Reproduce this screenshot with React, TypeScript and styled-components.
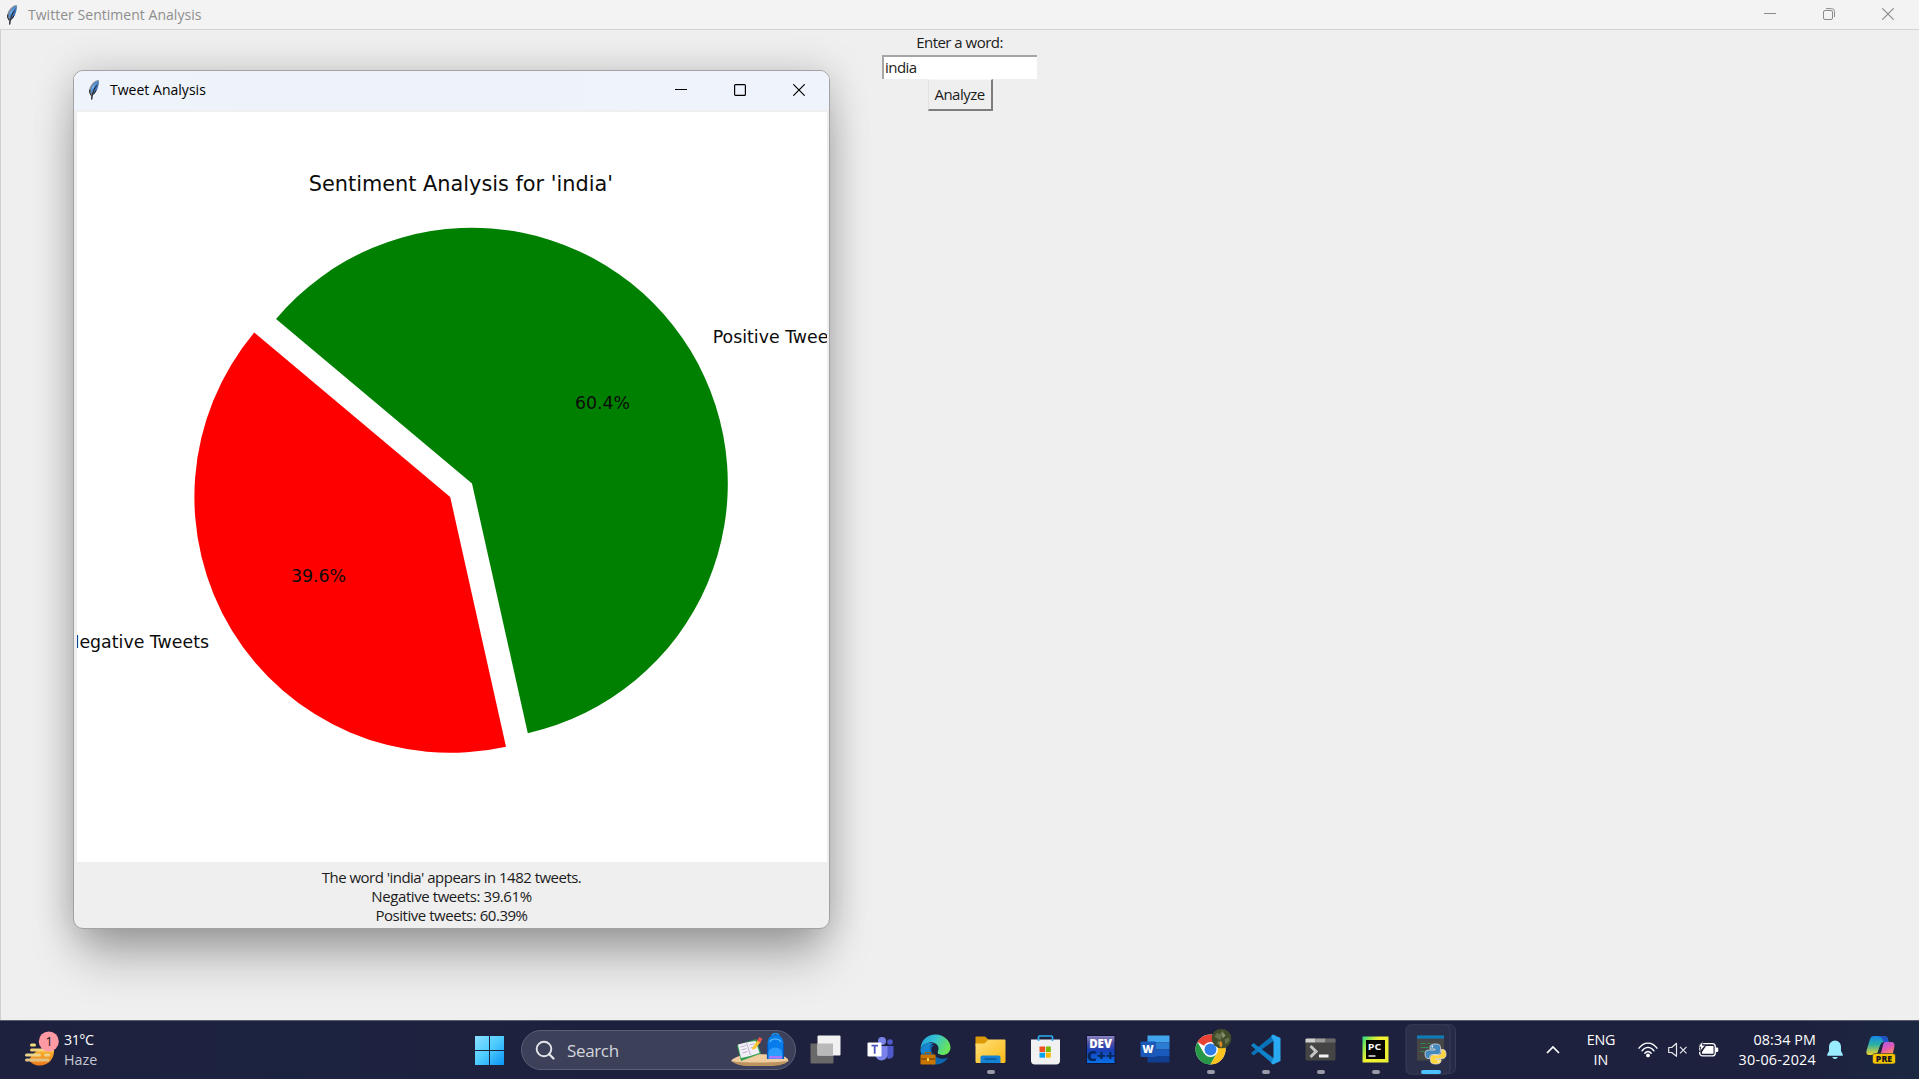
import React from "react";
import styled, { createGlobalStyle } from "styled-components";

const UI = `"Open Sans", "Noto Sans", sans-serif`;

const Global = createGlobalStyle`
  * { box-sizing: border-box; }
  html, body { margin: 0; padding: 0; overflow: hidden; }
  body { font-family: ${UI}; background: #efefef; }
`;

const Screen = styled.div`
  position: relative;
  width: 1919px;
  height: 1079px;
  display: flex;
  flex-direction: column;
  overflow: hidden;
`;

const MainBar = styled.header`
  flex: none;
  height: 30px;
  display: flex;
  align-items: center;
  padding: 0 25px 0 6px;
  background: #f3f3f3;
  border-bottom: 1px solid #d4d4d4;
`;

const BarTitle = styled.span<{ $color: string; $gap: number; $track: number }>`
  margin-left: ${(p) => p.$gap}px;
  flex: 1;
  font-size: 14px;
  line-height: 20px;
  letter-spacing: ${(p) => p.$track}px;
  color: ${(p) => p.$color};
  white-space: nowrap;
`;

const Controls = styled.div<{ $lift?: number }>`
  display: flex;
  align-items: center;
  gap: 47px;
  padding-bottom: ${(p) => p.$lift ?? 0}px;
`;

const MainArea = styled.main`
  flex: 1;
  display: flex;
  flex-direction: column;
  align-items: center;
  padding: 3px 1px 0 0;
  border-left: 1px solid #d0d0d0;
  background: #efefef;
`;

const TkLabel = styled.span<{ $track?: number }>`
  display: block;
  font-size: 15px;
  line-height: 18.8px;
  letter-spacing: ${(p) => p.$track ?? -0.52}px;
  color: #1c1c1c;
  white-space: nowrap;
  text-align: center;
`;

const Entry = styled.div`
  width: 155px;
  height: 24px;
  margin-top: 3px;
  padding: 1px 0 0 1px;
  display: flex;
  background: #fff;
  border-top: 2px solid #a6a6a6;
  border-left: 2px solid #a6a6a6;
`;

const AnalyzeButton = styled.button`
  width: 65px;
  height: 32px;
  margin-left: 1px;
  padding: 0;
  display: flex;
  align-items: center;
  justify-content: center;
  font-family: ${UI};
  background: #efefef;
  border: 1px solid #e2e2e2;
  border-top-color: #f8f8f8;
  border-right: 2px solid #7d7d7d;
  border-bottom: 2px solid #7d7d7d;
`;

const Window = styled.section`
  position: absolute;
  left: 73px;
  top: 70px;
  width: 757px;
  height: 859px;
  display: flex;
  flex-direction: column;
  border: 1px solid #a2a2a2;
  border-radius: 10px;
  overflow: hidden;
  background: #efefef;
  box-shadow: 0 36px 48px -8px rgba(0, 0, 0, 0.27), 0 2px 38px rgba(0, 0, 0, 0.21);
`;

const WindowBar = styled.div`
  height: 39px;
  flex: none;
  display: flex;
  align-items: center;
  padding: 0 24px 1px 14px;
  background: linear-gradient(90deg, #eff3fb 0%, #eef3f9 30%, #eef3f9 60%, #eff3fb 75%);
`;

const Figure = styled.div`
  margin: 2px 2px 0 3px;
  width: 750px;
  height: 750px;
  background: #fff;
`;

const Summary = styled.div`
  flex: 1;
  padding-top: 6px;
  display: flex;
  flex-direction: column;
  align-items: center;
`;

const Taskbar = styled.footer`
  position: relative;
  flex: none;
  height: 59px;
  display: flex;
  align-items: center;
  color: #fff;
  background: linear-gradient(90deg, #1e213e 0%, #1c2340 15%, #1e213e 30%, #1e213e 94%, #1b2841 100%);
  border-top: 1px solid #5a5d70;
`;

const Weather = styled.div`
  width: 455px;
  flex: none;
  padding-left: 24px;
  display: flex;
  align-items: center;
`;

const Lines = styled.div<{ $align: string; $width?: number }>`
  display: flex;
  flex-direction: column;
  align-items: ${(p) => p.$align};
  width: ${(p) => (p.$width ? `${p.$width}px` : "auto")};
  padding-bottom: 1px;
  font-size: 14.3px;
  line-height: 20px;
  white-space: nowrap;
`;

const Line = styled.span<{ $track?: number; $dim?: boolean }>`
  letter-spacing: ${(p) => p.$track ?? 0}px;
  color: ${(p) => (p.$dim ? "#c6c8d0" : "#ffffff")};
`;

const StartSlot = styled.div`
  width: 66px;
  flex: none;
  display: flex;
  padding-left: 20px;
`;

const SearchPill = styled.div`
  width: 275px;
  height: 40px;
  flex: none;
  display: flex;
  align-items: center;
  padding: 0 6px 0 13px;
  border: 1px solid #5b5f76;
  border-radius: 20px;
  background: #3d4059;
`;

const SearchText = styled.span`
  flex: 1;
  margin-left: 12px;
  padding-top: 1px;
  font-size: 17px;
  letter-spacing: -0.35px;
  line-height: 24px;
  color: #d3d5dc;
`;

const Apps = styled.div`
  display: flex;
  flex: none;
  margin-left: 2px;
`;

const AppSlot = styled.div<{ $mark?: "open" | "active" }>`
  position: relative;
  width: 55px;
  height: 58px;
  display: flex;
  align-items: center;
  justify-content: center;
  &::after {
    content: "";
    display: ${(p) => (p.$mark ? "block" : "none")};
    position: absolute;
    bottom: 5px;
    left: 50%;
    width: ${(p) => (p.$mark === "active" ? 20 : 8)}px;
    height: 4px;
    transform: translateX(-50%);
    border-radius: 2px;
    background: ${(p) => (p.$mark === "active" ? "#4cc2ff" : "#989aa8")};
  }
`;

const Tray = styled.div`
  flex: 1;
  display: flex;
  align-items: center;
`;

const TrayItem = styled.div<{ $left: number }>`
  margin-left: ${(p) => p.$left}px;
  display: flex;
  flex: none;
`;

const Feather = () => (
  <svg width="12" height="22" viewBox="0 0 12 22">
    <path d="M10.6 1C7 1.2 2.5 5.4 1.5 10c-.4 2 .2 4.4 1.4 6l.2 4.5h1.2l.3-4.300C8.700 13.500 11 7.600 10.600 1z" fill="#7c8795" />
    <path d="M10 1.800C7.500 3 4.200 6.500 2.800 11l-.3 3.500C5 12.500 8 7 10 1.800z" fill="#4f92dc" />
    <path d="M10.600 1c.4 4.500-.8 8.500-3 11.800l-3 3.200L6 11.500z" fill="#3f72b8" />
    <path d="M8.500 6.500C6.500 9 4.400 13 3.700 20.500M1.800 10.500l-.2 3 1.600 3M8.200 11.500l-2.800 4" fill="none" stroke="#17181c" strokeWidth="1" />
    <path d="M6 6.500L4.300 9.500" stroke="#7db9f2" strokeWidth="1.200" />
  </svg>
);

const Minimize = ({ color }: { color: string }) => (
  <svg width="12" height="12" viewBox="0 0 12 12">
    <path d="M0 5.500h12" stroke={color} />
  </svg>
);
const Maximize = ({ color }: { color: string }) => (
  <svg width="12" height="12" viewBox="0 0 12 12">
    <rect x=".6" y=".6" width="10.800" height="10.800" rx="1" fill="none" stroke={color} strokeWidth="1.200" />
  </svg>
);
const Restore = ({ color }: { color: string }) => (
  <svg width="12" height="12" viewBox="0 0 12 12">
    <rect x=".5" y="2.500" width="9" height="9" rx="1.500" fill="none" stroke={color} />
    <path d="M3 .6h5.500a3 3 0 0 1 3 3V9" fill="none" stroke={color} />
  </svg>
);
const Close = ({ color }: { color: string }) => (
  <svg width="12" height="12" viewBox="0 0 12 12">
    <path d="M.3.3l11.400 11.400M11.700.3L.3 11.700" stroke={color} strokeWidth="1.200" />
  </svg>
);

type Slice = { cx: number; cy: number; from: number; to: number; fill: string };
const RADIUS = 255.8;
const slices: Slice[] = [
  { cx: 373.2, cy: 385, from: 140, to: 282.6, fill: "#ff0000" },
  { cx: 395, cy: 371.5, from: 282.6, to: 500, fill: "#008000" },
];
const slicePath = ({ cx, cy, from, to }: Slice) => {
  const point = (deg: number) => {
    const a = (deg * Math.PI) / 180;
    return `${cx + RADIUS * Math.cos(a)} ${cy - RADIUS * Math.sin(a)}`;
  };
  return `M${cx} ${cy}L${point(from)}A${RADIUS} ${RADIUS} 0 ${to - from > 180 ? 1 : 0} 0 ${point(to)}Z`;
};

const PieChart = () => (
  <svg width="750" height="750" viewBox="0 0 750 750" fontFamily='"DejaVu Sans", sans-serif' fontSize="17.360" fill="#0c0c0c" display="block">
    {slices.map((s) => (
      <path key={s.fill} d={slicePath(s)} fill={s.fill} />
    ))}
    <text x="383.900" y="79" fontSize="20.830" textAnchor="middle">Sentiment Analysis for 'india'</text>
    <text x="635.700" y="230.500">Positive Tweets</text>
    <text x="132" y="535.500" textAnchor="end">Negative Tweets</text>
    <text x="525.500" y="297" textAnchor="middle">60.4%</text>
    <text x="241.500" y="469.500" textAnchor="middle">39.6%</text>
  </svg>
);

const HazeIcon = () => (
  <svg width="40" height="44" viewBox="0 0 40 44">
    <defs>
      <linearGradient id="sun" x1="0" y1="0" x2="0" y2="1">
        <stop offset="0" stopColor="#f9b52b" /><stop offset="1" stopColor="#ee7a1c" />
      </linearGradient>
    </defs>
    <path d="M14 22H30C30.500 31 24 37.500 16 37.500C11 37.500 7 35.500 5 32L8 27z" fill="url(#sun)" />
    <g strokeLinecap="round" strokeWidth="3">
      <path d="M7.500 17h3" stroke="#f5dc7a" />
      <path d="M7.500 22h21" stroke="#f2d27a" />
      <path d="M2.500 27h13M21.500 27h3" stroke="#ecd38c" />
      <path d="M2.500 32h21.500" stroke="#e2c184" />
    </g>
    <circle cx="24.800" cy="13.400" r="10" fill="#ff99a4" />
    <text x="25" y="18.200" textAnchor="middle" fontFamily={UI} fontSize="13.500" fill="#1a1a1a">1</text>
  </svg>
);

const StartIcon = () => (
  <svg width="29" height="29" viewBox="0 0 29 29">
    <defs>
      <linearGradient id="win" x1="0" y1="0" x2="1" y2="1">
        <stop offset="0" stopColor="#8be0ff" /><stop offset=".5" stopColor="#4ccbff" /><stop offset="1" stopColor="#0a93f5" />
      </linearGradient>
    </defs>
    <path d="M0 0h14v14H0zM15 0h14v14H15zM0 15h14v14H0zM15 15h14v14H15z" fill="url(#win)" />
  </svg>
);

const SearchArt = () => (
  <svg width="58" height="34" viewBox="0 0 58 34">
    <path d="M0 28C3 24 12 21 22 21L46 21.500C53 22.500 57 25 57.500 28L52 31H8z" fill="#f0cda0" />
    <path d="M0 28c10 2 47 2 57.500 0C52 32.500 45 33 40 33H18C10 33 4 31 0 28z" fill="#bd935f" />
    <path d="M6 12.500L25 6l5 14.500L10 28z" fill="#35a055" />
    <path d="M7 11.500L15 9.500l9.500-1.500 4 12L19 23 10 25z" fill="#f3eff8" />
    <path d="M15.500 10l4 12M9.500 14l5-1.500M10.500 17l5-1.500M11.500 20l5-1.500M18.500 12l5-1.300M19.500 15l5-1.300" stroke="#a493bd" strokeWidth=".7" fill="none" />
    <path d="M21.500 14.500L27 6.500l3 2-6 7.500-3 .8z" fill="#ffc62e" /><path d="M26 7.500l2.500-3.500 3 2-2.500 3.500z" fill="#ee5548" />
    <path d="M41 3.500c0-4 7-4 7 0" fill="none" stroke="#1597f5" strokeWidth="1.500" />
    <path d="M36.500 11c0-6 3-9 8-9s8 3 8 9v15h-16z" fill="#087ceb" />
    <path d="M39 9c1-4 9-4 11 0" stroke="#5fbcff" strokeWidth="1.200" fill="none" />
    <path d="M37.500 20c0-7 13.500-7 13.500 0v6H37.500z" fill="#2c9cff" /><path d="M38 23h13v2.500H38z" fill="#a678ff" />
    <path d="M36.500 11v15M52.500 11v15" stroke="#0655b8" strokeWidth="1.200" />
  </svg>
);

// Taskbar icons share one canvas whose origin is the middle of the slot.
const Glyph = ({ children }: { children: React.ReactNode }) => (
  <svg width="55" height="58" viewBox="-27.500 -28.500 55 58" fontFamily={UI}>{children}</svg>
);

const TaskViewIcon = () => (
  <Glyph>
    <path d="M-15-6H8v19a1 1 0 0 1-1 1h-21a1 1 0 0 1-1-1z" fill="#696969" />
    <rect x="-8" y="-14" width="23" height="20" rx="1" fill="#f1f1f1" />
    <path d="M-8-6H7.500V6H-8z" fill="#b9b9b9" />
  </Glyph>
);
const TeamsIcon = () => (
  <Glyph>
    <circle cx="9.500" cy="-7.500" r="2.800" fill="#5059c9" />
    <path d="M5-3.500h8V5a4.500 4.500 0 0 1-6 4z" fill="#5059c9" />
    <circle cx="1.500" cy="-8.500" r="4" fill="#7b83eb" />
    <path d="M-5-3.500H7V5A6 6 0 0 1-5 5z" fill="#7b83eb" />
    <rect x="-13" y="-7" width="14" height="14" rx="1" fill="#fff" />
    <path d="M-9-3.800h6.500M-5.800-3.500V4.300" stroke="#4b53bc" strokeWidth="1.800" />
  </Glyph>
);
const EdgeIcon = () => (
  <Glyph>
    <defs>
      <linearGradient id="edge" x1="0" x2="1" y1="0" y2=".4">
        <stop offset="0" stopColor="#1c9de0" /><stop offset=".5" stopColor="#36c2d2" /><stop offset="1" stopColor="#68e35b" />
      </linearGradient>
    </defs>
    <path d="M-15 0C-15 9-8 15 0 15c6 0 10-3 12.500-7C8 10 4 9 2 8L-2-5z" fill="#0c66b0" />
    <path d="M-15 1C-15-10-8-15 0-15S15-9 15-2C15 3 11 5.500 7 5.500S1 4 2.500 1.500C5-4-1-8-6-7S-14-4-15 1z" fill="url(#edge)" />
    <path d="M-15 1C-13-6-7-8-2-6c-4 1-5.500 6-2 10h-10z" fill="#1786cf" />
    <path d="M-2-4C-6-1-4 6 2 8s9 0 11-1C15 4 10 6.500 6 5.500S1 3 2.500 1C3.500-3 0-5-2-4z" fill="#1e213e" />
    <rect x="-15" y="5" width="15" height="10" rx="1" fill="#c87400" />
    <path d="M-10 5V3h5v2" fill="none" stroke="#a95c00" strokeWidth="1.200" />
    <path d="M-15 9.500H0" stroke="#8b4b00" strokeWidth="1.500" /><rect x="-8.500" y="8.500" width="2" height="3" fill="#ffd34a" />
  </Glyph>
);
const ExplorerIcon = () => (
  <Glyph>
    <defs>
      <linearGradient id="fold" x1="0" x2="1" y1="0" y2="1">
        <stop offset="0" stopColor="#ffe07a" /><stop offset="1" stopColor="#fbb915" />
      </linearGradient>
    </defs>
    <path d="M-15-12a1 1 0 0 1 1-1h8.500l4 3.500v6H-15z" fill="#dd9a08" />
    <path d="M-15-6h9l4-4h16a1 1 0 0 1 1 1v21a1.500 1.500 0 0 1-1.500 1.500h-27A1.500 1.500 0 0 1-15 12z" fill="url(#fold)" />
    <path d="M-10 13.500V8a2 2 0 0 1 2-2H8a2 2 0 0 1 2 2v5.500z" fill="#1483d6" />
    <path d="M-6 9.500H6" stroke="#0a4d8f" strokeWidth="1.300" />
  </Glyph>
);
const StoreIcon = () => (
  <Glyph>
    <path d="M-14.500-10h29v21a4 4 0 0 1-4 4h-21a4 4 0 0 1-4-4z" fill="#f1f1f1" />
    <path d="M-7-8.500v-4a1 1 0 0 1 1-1H6a1 1 0 0 1 1 1v4" fill="none" stroke="#2aaef0" strokeWidth="1.700" />
    <path d="M-6-3h5.500v5.500H-6z" fill="#f15022" /><path d="M.3-3h5v5.500h-5z" fill="#7db900" />
    <path d="M-6 3.200h5.500v5H-6z" fill="#0aa1ef" /><path d="M.3 3.200h5v5h-5z" fill="#ffb800" />
  </Glyph>
);
const DevIcon = () => (
  <Glyph>
    <defs>
      <linearGradient id="dev" x1="0" x2="0" y1="0" y2="1">
        <stop offset="0" stopColor="#8d88c4" /><stop offset=".25" stopColor="#544fa0" /><stop offset=".55" stopColor="#1740b8" /><stop offset="1" stopColor="#0874ec" />
      </linearGradient>
    </defs>
    <rect x="-14" y="-14" width="28.500" height="28" fill="url(#dev)" stroke="#101538" />
    <text x="0" y="-1.500" textAnchor="middle" fontSize="11.500" fontWeight="800" fill="#fff">DEV</text>
    <text x="-13.500" y="11.500" fontSize="13.500" fontWeight="800" fill="#06265a" textLength="28" lengthAdjust="spacingAndGlyphs">C++</text>
  </Glyph>
);
const WordIcon = () => (
  <Glyph>
    <path d="M-8-14h22v7H-8z" fill="#41a5ee" /><path d="M-8-7h22v7H-8z" fill="#2b7cd3" />
    <path d="M-8 0h22v6.500H-8z" fill="#185abd" /><path d="M-8 6.500h22V13H-8z" fill="#103f91" />
    <rect x="-15" y="-8" width="15.500" height="15.500" rx="1" fill="#1b58b8" />
    <text x="-7.500" y="3.800" textAnchor="middle" fontSize="11" fontWeight="800" fill="#fff">W</text>
  </Glyph>
);
const ChromeIcon = () => (
  <Glyph>
    <circle r="15" fill="#fff" />
    <path d="M0 0L-13-7.500A15 15 0 0 1 13-7.500z" fill="#ea4335" />
    <path d="M-13-7.500A15 15 0 0 0 0 15L6.500 3.500-6.500 3.800z" fill="#279847" />
    <path d="M13-7.500A15 15 0 0 1 0 15L6.500 3.500 5-7.500z" fill="#fcc31e" />
    <circle r="7.500" fill="#fff" /><circle r="6" fill="#2f7de9" />
    <circle cx="11" cy="-11" r="9.800" fill="#414c2b" />
    <path d="M4-13l3-4 2 2 3-4 3 5-4 1-1 4-3-2zM8-9l3 2-2 3-3-2zM14-10l4-2 1 3-4 4z" fill="#67724c" />
    <path d="M9-7l1.500-2L12-5l-1 3-2-1z" fill="#d88a24" /><path d="M12-17l3 3-3 3z" fill="#8c9774" />
  </Glyph>
);
const CodeIcon = () => (
  <Glyph>
    <path d="M-14.500 3.500l2.500 2.500L8-8.500V-15z" fill="#0873b8" />
    <path d="M-14.500-4l2.500-2.500L8 8.500V15z" fill="#0f84cc" />
    <path d="M7.500-15L15-11.500v23L7.500 15l-2-1.500L8 8.500v-17L5.500-13.500z" fill="#29a9f2" />
  </Glyph>
);
const TerminalIcon = () => (
  <Glyph>
    <rect x="-15" y="-11" width="30" height="22" rx="1.500" fill="#454545" />
    <path d="M-14-11h9v4h-10v-3z" fill="#d0d0d0" /><path d="M-5-11H5v4H-5z" fill="#9d9d9d" /><path d="M5-11h9l1 1v3H5z" fill="#696969" />
    <path d="M-10-3.500l5.500 5.500L-10 7.500" fill="none" stroke="#c6c6c6" strokeWidth="3" /><path d="M-1.500 6.500h9.500" stroke="#f3f3f3" strokeWidth="3" />
  </Glyph>
);
const PyCharmIcon = () => (
  <Glyph>
    <defs>
      <linearGradient id="pc" x1="0" x2="1" y1="0" y2=".6">
        <stop offset="0" stopColor="#21d789" /><stop offset=".25" stopColor="#9be84a" /><stop offset=".5" stopColor="#f5f132" /><stop offset="1" stopColor="#e9ee35" />
      </linearGradient>
    </defs>
    <rect x="-13" y="-13" width="26" height="26" fill="url(#pc)" />
    <rect x="-9.500" y="-9.500" width="19" height="19" fill="#050505" />
    <text x="-7.800" y="0" fontSize="9.500" fontWeight="700" fill="#fff" textLength="13.500" lengthAdjust="spacingAndGlyphs">PC</text>
    <path d="M-7 6.500h7" stroke="#fff" strokeWidth="1.400" />
  </Glyph>
);
const PythonIcon = () => (
  <Glyph>
    <path d="M15-24.800h4a6 6 0 0 1 6 6V18a6 6 0 0 1-6 6h-4" fill="#262a46" stroke="#383c55" />
    <rect x="-24.500" y="-24.800" width="44" height="49.500" rx="5" fill="#2b2f4a" stroke="#383c55" />
    <rect x="-13.500" y="-14" width="27" height="25" fill="#464646" /><path d="M-13.500-14h27v3h-27z" fill="#0c7dba" />
    <path d="M-10-6h5M-3-6h3M-10-2h8M-10 2h4" stroke="#2f8b4d" strokeWidth="1.200" />
    <path d="M4.500-5.500c4 0 5.500 1 5.500 3.500v4c0 2-1.200 3-3 3H2C0 5-1 6-1 8v1h-1.500C-5 9-5.500 6-5.500 4S-4.500.5-2 .5H4.500v-1H-.5v-2c0-2 2-3 5-3z" fill="#4488bd" stroke="#eee" strokeWidth=".7" />
    <path d="M5.500 14.500c-4 0-5.500-1-5.500-3.500V8.500c0-2 1-3 3-3H8c2 0 3-1 3-3V0h1.500C15 0 15.500 3 15.500 5s-1 4-3.500 4H5.500v1h5v1.500c0 2-2 3-5 3z" fill="#ffd53f" stroke="#eee" strokeWidth=".7" />
    <circle cx="1.800" cy="-3" r=".9" fill="#fff" /><circle cx="8" cy="12" r=".9" fill="#fff" />
  </Glyph>
);

const apps: { name: string; Icon: React.FC; mark?: "open" | "active" }[] = [
  { name: "Task View", Icon: TaskViewIcon },
  { name: "Teams", Icon: TeamsIcon },
  { name: "Edge", Icon: EdgeIcon },
  { name: "Explorer", Icon: ExplorerIcon, mark: "open" },
  { name: "Store", Icon: StoreIcon },
  { name: "Dev-C++", Icon: DevIcon },
  { name: "Word", Icon: WordIcon },
  { name: "Chrome", Icon: ChromeIcon, mark: "open" },
  { name: "VS Code", Icon: CodeIcon, mark: "open" },
  { name: "Terminal", Icon: TerminalIcon, mark: "open" },
  { name: "PyCharm", Icon: PyCharmIcon, mark: "open" },
  { name: "Python", Icon: PythonIcon, mark: "active" },
];

const Chevron = () => (
  <svg width="14" height="10" viewBox="0 0 14 10"><path d="M1 8l6-6 6 6" fill="none" stroke="#fff" strokeWidth="1.700" /></svg>
);
const Wifi = () => (
  <svg width="20" height="16" viewBox="0 0 20 16">
    <g fill="none" stroke="#fff" strokeWidth="1.400" strokeLinecap="round">
      <path d="M1 6.200C6-.6 14-.6 19 6.200" /><path d="M4 8.800c3.500-4.600 8.500-4.600 12 0" /><path d="M6.800 11.300c2-2.500 4.400-2.500 6.400 0" />
    </g>
    <circle cx="10" cy="13.400" r="1.900" fill="#fff" />
  </svg>
);
const Mute = () => (
  <svg width="20" height="16" viewBox="0 0 20 16" fill="none" stroke="#e4e5ea" strokeWidth="1.200" strokeLinejoin="round">
    <path d="M.7 5.500h3L8.500 1.300v13L3.700 10.500h-3z" /><path d="M12 4.800l6.500 6.500M18.500 4.800L12 11.300" />
  </svg>
);
const Battery = () => (
  <svg width="21" height="18" viewBox="0 0 21 18">
    <rect x="1.700" y="2.700" width="15.600" height="12.200" rx="3" fill="none" stroke="#fff" strokeWidth="1.300" />
    <path d="M8 5h7.500v7.700H4V11z" fill="#fff" /><path d="M18 6.500h1.200a1 1 0 0 1 1 1V10a1 1 0 0 1-1 1H18z" fill="#fff" />
    <path d="M5-.5L.2 6h2.600L1.500 11 7.500 4.200H4.500z" fill="#fff" stroke="#1e213e" strokeWidth=".8" />
  </svg>
);
const Bell = () => (
  <svg width="16" height="20" viewBox="0 0 16 20">
    <path d="M8 .5a6 6 0 0 0-6 6V11L.2 14.500c-.3.600 0 1.200.700 1.200h14.200c.7 0 1-.6.700-1.200L14 11V6.500a6 6 0 0 0-6-6zM5.200 17a3 3 0 0 0 5.600 0z" fill="#99ebff" />
  </svg>
);
const Copilot = () => (
  <svg width="30" height="30" viewBox="0 0 30 30">
    <defs>
      <linearGradient id="cpa" x1="0" y1="0" x2="0" y2="1">
        <stop offset="0" stopColor="#1588e6" /><stop offset=".45" stopColor="#2bb0a4" /><stop offset="1" stopColor="#f4d327" />
      </linearGradient>
      <linearGradient id="cpb" x1="0" y1="0" x2=".5" y2="1">
        <stop offset="0" stopColor="#a05af0" /><stop offset=".6" stopColor="#e159b2" /><stop offset="1" stopColor="#ff8a63" />
      </linearGradient>
    </defs>
    <path d="M8 1h10c3 0 4 2 4.500 6h-4c-3 0-4 2-5 5l-2 6c-.6 2-1.500 2-3 2H3c-3 0-3-3-2-6L4 4c.7-2 2-3 4-3z" fill="url(#cpa)" />
    <path d="M10 1h8c3 0 4 2 4.500 6h-5c-1-4-3-6-7.500-6z" fill="#2152c7" />
    <path d="M19 7h6c3 0 4 2 3.300 5L26.500 20H12c2 0 3-2 3.500-4L17 10c.5-2 1-3 2-3z" fill="url(#cpb)" />
    <path d="M16.500 8l-4.500 11" stroke="#1c2540" strokeWidth="1.600" />
    <rect x="6.500" y="18.500" width="23" height="10.500" rx="2.500" fill="#f5c400" stroke="#1b2740" strokeWidth=".6" />
    <text x="18" y="26.800" textAnchor="middle" fontFamily={UI} fontSize="8.800" fontWeight="800" fill="#16161c">PRE</text>
  </svg>
);

export default function App() {
  return (
    <Screen>
      <Global />
      <MainBar>
        <Feather />
        <BarTitle $color="#8e8e8e" $gap={10} $track={0.03}>Twitter Sentiment Analysis</BarTitle>
        <Controls $lift={1}>
          <Minimize color="#8a8a8a" />
          <Restore color="#8a8a8a" />
          <Close color="#8a8a8a" />
        </Controls>
      </MainBar>
      <MainArea>
        <TkLabel>Enter a word:</TkLabel>
        <Entry><TkLabel>india</TkLabel></Entry>
        <AnalyzeButton><TkLabel>Analyze</TkLabel></AnalyzeButton>
      </MainArea>
      <Taskbar>
        <Weather>
          <HazeIcon />
          <Lines $align="flex-start">
            <Line $track={-0.5}>31°C</Line>
            <Line $dim>Haze</Line>
          </Lines>
        </Weather>
        <StartSlot><StartIcon /></StartSlot>
        <SearchPill>
          <svg width="20" height="20" viewBox="0 0 20 20" fill="none" stroke="#e3e5ea" strokeWidth="1.900">
            <circle cx="9" cy="9" r="7.300" /><path d="M14 14l4.500 4.500" strokeWidth="2.300" strokeLinecap="round" />
          </svg>
          <SearchText>Search</SearchText>
          <SearchArt />
        </SearchPill>
        <Apps>
          {apps.map(({ name, Icon, mark }) => (
            <AppSlot key={name} $mark={mark}><Icon /></AppSlot>
          ))}
        </Apps>
        <Tray>
          <TrayItem $left={88}><Chevron /></TrayItem>
          <TrayItem $left={21}>
            <Lines $align="center" $width={40}><Line $track={-0.2}>ENG</Line><Line>IN</Line></Lines>
          </TrayItem>
          <TrayItem $left={17}><Wifi /></TrayItem>
          <TrayItem $left={10}><Mute /></TrayItem>
          <TrayItem $left={10}><Battery /></TrayItem>
          <TrayItem $left={7}>
            <Lines $align="flex-end" $width={90}><Line $track={0.1}>08:34 PM</Line><Line $track={0.28}>30-06-2024</Line></Lines>
          </TrayItem>
          <TrayItem $left={11}><Bell /></TrayItem>
          <TrayItem $left={23}><Copilot /></TrayItem>
        </Tray>
      </Taskbar>
      <Window>
        <WindowBar>
          <Feather />
          <BarTitle $color="#000" $gap={10} $track={0.02}>Tweet Analysis</BarTitle>
          <Controls>
            <Minimize color="#000" />
            <Maximize color="#000" />
            <Close color="#000" />
          </Controls>
        </WindowBar>
        <Figure><PieChart /></Figure>
        <Summary>
          <TkLabel>The word 'india' appears in 1482 tweets.</TkLabel>
          <TkLabel $track={-0.42}>Negative tweets: 39.61%</TkLabel>
          <TkLabel $track={-0.46}>Positive tweets: 60.39%</TkLabel>
        </Summary>
      </Window>
    </Screen>
  );
}
